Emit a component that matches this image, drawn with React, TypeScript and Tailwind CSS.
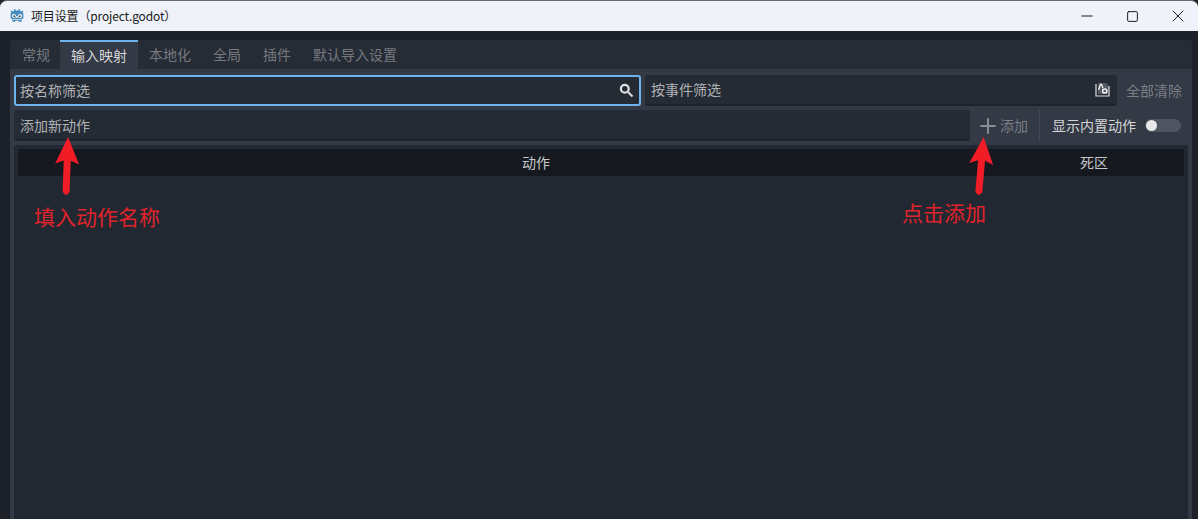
import { Minus, Plus, Square, X } from 'lucide-react';

const cjk = { fontFamily: '"Noto Sans CJK SC", "Noto Sans", sans-serif' };

const tabs = ['常规', '输入映射', '本地化', '全局', '插件', '默认导入设置'];

function GodotLogo() {
  return (
    <svg width="16" height="16" viewBox="0 0 16 16">
      <path
        d="M5.200 1.200L6.300 1l.4 1.500h2.600L9.700 1l1.100.2.300 1.500 1.300.9 1.100-1 .9.700-.6 1.500.6 1v4.700l-1.200.3-.3 2.500-2.800.8-.5-1.400H6.400l-.5 1.400-2.800-.8-.3-2.500-1.200-.3V5.800l.6-1-.6-1.500.9-.7 1.100 1 1.300-.9z"
        fill="#478cbf"
      />
      <circle cx="5" cy="8" r="2" fill="#fff" />
      <circle cx="11" cy="8" r="2" fill="#fff" />
      <circle cx="5.300" cy="8.200" r="1" fill="#414042" />
      <circle cx="10.700" cy="8.200" r="1" fill="#414042" />
      <rect x="7.300" y="8" width="1.400" height="2" fill="#fff" />
      <path d="M3 11.200h10v.9H3z" fill="#cfe0ee" />
    </svg>
  );
}

function ArrowUp({ className }: { className: string }) {
  return (
    <svg className={`absolute ${className}`} width="26" height="60" viewBox="0 0 26 60">
      <path d="M13 0L25 27 16.500 23.500 16.500 55Q13 61 9.500 55L9.500 23.500 1 27z" fill="#f01c26" />
    </svg>
  );
}

function SearchIcon() {
  return (
    <svg width="15" height="15" viewBox="0 0 15 15" fill="none" stroke="#e0e0e0">
      <circle cx="5.800" cy="5.800" r="3.900" strokeWidth="2.200" />
      <path d="M9 9l4.500 4.500" strokeWidth="2" />
    </svg>
  );
}

function FilterEventIcon() {
  return (
    <svg width="15" height="15" viewBox="0 0 15 15" fill="none">
      <path d="M1 2v12h13V4" stroke="#e0e0e0" strokeWidth="1.200" />
      <path d="M3 1h8l2 2v9H3z" fill="#555a63" />
      <path d="M3.500 8L5.500 2.500h1L8 6" stroke="#f0f0f0" strokeWidth="1.300" />
      <circle cx="9.700" cy="9" r="2.100" stroke="#f0f0f0" strokeWidth="1.500" />
    </svg>
  );
}

export default function App() {
  return (
    <div style={cjk} className="relative flex h-[519px] w-[1198px] flex-col overflow-hidden bg-[#1c2129] text-[14px]">
      {/* window title bar */}
      <div className="flex h-[31px] shrink-0 items-center justify-between rounded-t-[7px] border-t border-[#6b6b6b] bg-[#eff2f9] pl-[9px] text-[#1a1a1a]">
        <div className="flex items-center gap-[6px]">
          <GodotLogo />
          <span className="text-[12px] tracking-[-0.15px]">项目设置（project.godot）</span>
        </div>
        <div className="flex items-center">
          <div className="flex w-[45px] justify-center"><Minus size={18} strokeWidth={1.300} /></div>
          <div className="flex w-[46px] justify-center"><Square size={13} strokeWidth={1.800} /></div>
          <div className="ml-[3px] flex w-[40px] justify-center"><X size={20} strokeWidth={1.200} /></div>
        </div>
      </div>

      <div className="flex min-h-0 flex-1 flex-col pr-[6px] pl-[10px] pt-[9px]">
        {/* tabs */}
        <div className="flex h-[29px] shrink-0 items-stretch rounded-t-[3px] bg-[#262c36] text-[#77797e]">
          {tabs.map((tab, i) =>
            i === 1 ? (
              <div key={tab} className="flex w-[78px] items-center justify-center border-t-2 border-[#6db3ee] bg-[#333945] text-[#d4d5d7]">
                {tab}
              </div>
            ) : (
              <div key={tab} className={`flex items-center ${i === 0 ? 'w-[50px] pl-[12px]' : 'px-[11px]'}`}>
                {tab}
              </div>
            ),
          )}
        </div>

        {/* tab body */}
        <div className="flex min-h-0 flex-1 flex-col bg-[#333945] px-[4px] pt-[6px]">
          <div className="flex h-[31px] shrink-0 gap-[4px]">
            <div className="flex w-[627px] items-center justify-between rounded-[3px] border-2 border-[#6db3ee] bg-[#252b35] pr-[5px] pl-[4px] text-[#b0b2b6]">
              <span>按名称筛选</span>
              <SearchIcon />
            </div>
            <div className="flex w-[472px] items-center justify-between rounded-[3px] border-b-2 border-[#1e232b] bg-[#252b35] pr-[7px] pl-[6px] text-[#b0b2b6]">
              <span>按事件筛选</span>
              <FilterEventIcon />
            </div>
            <div className="flex flex-1 items-center pl-[5px] text-[#7b7f86]">全部清除</div>
          </div>

          <div className="mt-[4px] flex h-[31px] shrink-0 items-stretch">
            <div className="flex w-[956px] items-center rounded-[3px] border-b-2 border-[#1e232b] bg-[#252b35] pt-[1px] pl-[6px] text-[#b0b2b6]">
              添加新动作
            </div>
            <div className="ml-[6px] flex items-center gap-0 text-[#7b7f86]">
              <Plus size={24} strokeWidth={2} className="text-[#8a8d93]" />
              <span>添加</span>
            </div>
            <div className="ml-[11px] w-px bg-[#444a56]" />
            <div className="ml-[12px] flex items-center text-[#d4d5d7]">显示内置动作</div>
            <div className="ml-[9px] flex items-center">
              <div className="flex h-[13px] w-[36px] items-center rounded-full bg-[#4f5560] pl-[1px]">
                <div className="h-[11px] w-[11px] rounded-full bg-[#e8e8e8]" />
              </div>
            </div>
          </div>

          {/* action tree */}
          <div className="mt-[4px] min-h-0 flex-1 rounded-t-[3px] bg-[#222831] px-[4px] pt-[4px]">
            <div className="flex h-[27px] rounded-[3px] bg-[#15181f] text-[#c8c9cc]">
              <div className="flex w-[1036px] items-center justify-center">动作</div>
              <div className="flex w-[80px] items-center justify-center border-x border-[#181b22]">死区</div>
              <div className="flex-1" />
            </div>
          </div>
        </div>
      </div>

      {/* annotations drawn over the screenshot */}
      <ArrowUp className="left-[54px] top-[137px] rotate-[2deg]" />
      <span className="absolute left-[34px] top-[201px] text-[21px] leading-[30px] text-[#e0232b]">填入动作名称</span>
      <ArrowUp className="left-[968px] top-[137px] rotate-[5deg]" />
      <span className="absolute left-[902px] top-[197px] text-[21px] leading-[30px] text-[#e0232b]">点击添加</span>
    </div>
  );
}
